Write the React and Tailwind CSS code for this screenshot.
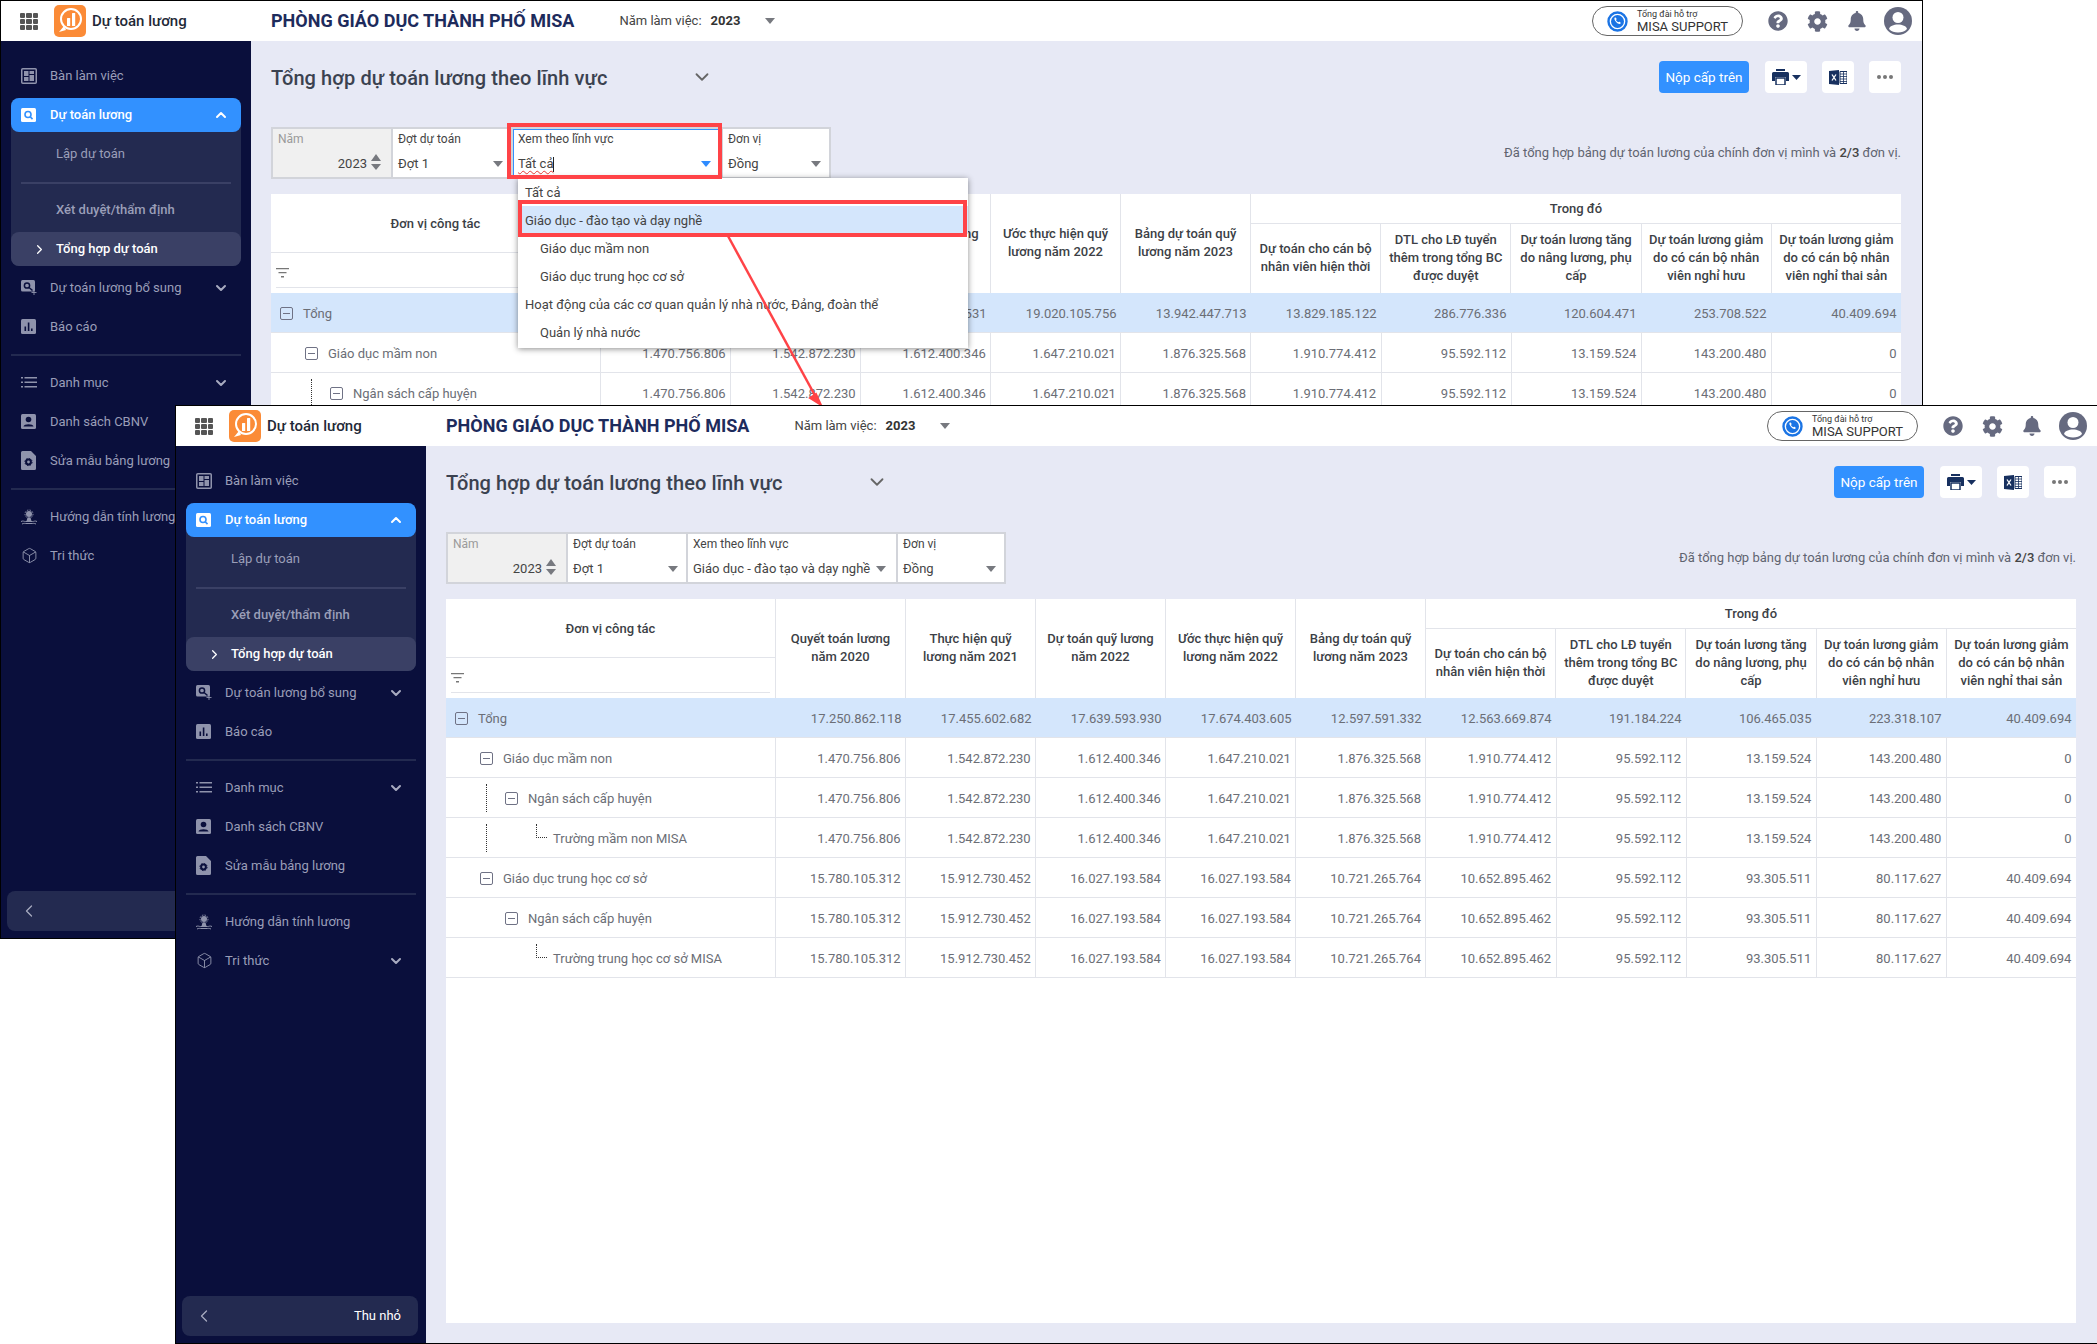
import React from "react";
import { ChevronDown, ChevronUp, ChevronRight, ChevronLeft, Box } from "lucide-react";
import { FaQuestionCircle, FaCog, FaBell } from "react-icons/fa";

const Tri = ({ className = "fill-[#77797f]", w = 10, h = 6 }) => (
  <svg width={w} height={h} viewBox="0 0 10 6" preserveAspectRatio="none" className={className}><path d="M0 0h10L5 6z" /></svg>
);

const GridIcon = () => (
  <div className="grid grid-cols-3 gap-[1px] w-[18px] h-[17px]">
    {Array.from({ length: 9 }).map((_, i) => <div key={i} className="bg-[#555] rounded-[1px]" />)}
  </div>
);

const Logo = () => (
  <svg width="32" height="32" viewBox="0 0 32 32">
    <rect width="32" height="32" rx="5" fill="#fb8b37" />
    <circle cx="17" cy="14" r="10" fill="none" stroke="#fff" strokeWidth="2" />
    <path d="M10 21l-5 6 7-2" fill="#fff" />
    <rect x="13" y="13" width="3.2" height="8" rx=".5" fill="#fff" />
    <rect x="18" y="8" width="3.2" height="13" rx=".5" fill="#fff" />
  </svg>
);

const c = "#8f93ac";
const IBoard = () => (
  <svg width="16" height="16" viewBox="0 0 16 16"><rect x=".75" y=".75" width="14.5" height="14.5" rx="1" fill="none" stroke={c} strokeWidth="1.5" /><path d="M3 3h4.5v5H3zM8.5 3H13v3H8.5zM3 9h4.5v4H3zM8.5 7H13v6H8.5z" fill={c} /></svg>
);
const ISearch = ({ fg = "#fff", bg = "#3291ff" }) => (
  <svg width="16" height="14" viewBox="0 0 16 14"><rect width="15" height="14" rx="1.5" fill={fg} /><circle cx="7" cy="6.5" r="3" fill="none" stroke={bg} strokeWidth="1.6" /><path d="M9.2 8.8l2.3 2.3" stroke={bg} strokeWidth="1.6" /></svg>
);
const ISearchPlus = () => (
  <svg width="16" height="15" viewBox="0 0 16 15"><rect width="14" height="11.5" rx="1.5" fill={c} /><circle cx="6" cy="5.5" r="2.6" fill="none" stroke="#0a0f3c" strokeWidth="1.5" /><path d="M8 7.5l3.5 3" stroke="#0a0f3c" strokeWidth="1.5" /><path d="M13 10v5M10.500 12.500h5" stroke={c} strokeWidth=".9" /></svg>
);
const IBars = () => (
  <svg width="15" height="15" viewBox="0 0 15 15"><rect width="15" height="15" rx="1.5" fill={c} /><path d="M3.500 7.500h1.600V12H3.500zM6.800 3.500h1.600V12H6.800zM10 9.500h1.600V12H10z" fill="#0a0f3c" /></svg>
);
const IList = () => (
  <svg width="16" height="11" viewBox="0 0 16 11" fill={c}><path d="M0 0h2v1.500H0zM3.500 0H16v1.500H3.500zM0 4.500h2V6H0zM3.500 4.500H16V6H3.500zM0 9h2v1.500H0zM3.500 9H16v1.500H3.500z" /></svg>
);
const IPerson = () => (
  <svg width="15" height="15" viewBox="0 0 15 15"><rect width="15" height="15" rx="1.500" fill={c} /><circle cx="7.500" cy="5.500" r="2.800" fill="#0a0f3c" /><path d="M2.500 12.500c.4-3 9.600-3 10 0z" fill="#0a0f3c" /></svg>
);
const IDocGear = () => (
  <svg width="15" height="19" viewBox="0 0 15 19"><path d="M1.500 0H10l5 5v12.500a1.500 1.500 0 01-1.500 1.500h-12A1.500 1.500 0 010 17.500v-16A1.500 1.500 0 011.500 0z" fill={c} /><circle cx="7.500" cy="11" r="2.400" fill="none" stroke="#0a0f3c" strokeWidth="2" /><circle cx="7.500" cy="11" r="3.600" fill="none" stroke="#0a0f3c" strokeWidth="1" strokeDasharray="1.500 1.300" /></svg>
);
const IGuide = () => (
  <svg width="16" height="16" viewBox="0 0 16 16"><circle cx="8" cy="5" r="3" fill={c} /><circle cx="8" cy="5" r="4" fill="none" stroke={c} strokeWidth="1" strokeDasharray="1.500 1.200" /><path d="M6.500 8.500h3l1 3.500h-5z" fill={c} /><path d="M0 12.500c2-1 3 0 4.500 0h7c1.500 0 2.500-1 4.500 0M1 15c2-1 3-.5 4-.5h6c1 0 2-.5 4 .5" fill="none" stroke={c} strokeWidth="1" /></svg>
);

function Item({ icon, label, chevron }) {
  return (
    <div className="h-[39px] flex items-center pl-[20px] pr-[22px] text-[13px] text-[#9a9eb8]">
      <div className="w-[29px] shrink-0 flex items-center">{icon}</div>
      <span className="whitespace-nowrap">{label}</span>
      {chevron && <ChevronDown size={16} strokeWidth={3} className="ml-auto text-[#a8abc0]" />}
    </div>
  );
}

function Sidebar() {
  return (
    <aside className="w-[250px] shrink-0 bg-[#0a0f3c] flex flex-col pt-[15px]">
      <Item icon={<IBoard />} label="Bàn làm việc" />
      <div className="mt-[3px] mx-[10px] w-[230px] bg-[#232a50] rounded-[8px] flex flex-col">
        <div className="h-[34px] bg-[#3291ff] rounded-[8px] flex items-center pl-[10px] pr-[12px] text-white text-[13px] font-medium">
          <div className="w-[29px] flex items-center"><ISearch /></div>
          <span>Dự toán lương</span>
          <ChevronUp size={16} strokeWidth={3} className="ml-auto" />
        </div>
        <div className="h-[41px] pl-[45px] pt-[2px] flex items-center text-[13px] text-[#9a9eb8]">Lập dự toán</div>
        <div className="mt-[9px] mx-[10px] h-[2px] bg-[#3a4065]" />
        <div className="h-[48px] pl-[45px] pt-[4px] flex items-center text-[13px] text-[#9a9eb8] font-medium">Xét duyệt/thẩm định</div>
        <div className="h-[34px] bg-[#3a4065] rounded-[8px] flex items-center pl-[21px] text-white text-[13px] font-medium">
          <ChevronRight size={15} strokeWidth={2} className="w-[24px] pr-[9px]" />
          <span>Tổng hợp dự toán</span>
        </div>
      </div>
      <div className="mt-[2px]">
        <Item icon={<ISearchPlus />} label="Dự toán lương bổ sung" chevron />
        <Item icon={<IBars />} label="Báo cáo" />
      </div>
      <div className="mt-[8px] mx-[10px] h-[2px] bg-[#232a50]" />
      <div className="mt-[7px]">
        <Item icon={<IList />} label="Danh mục" chevron />
        <Item icon={<IPerson />} label="Danh sách CBNV" />
        <Item icon={<IDocGear />} label="Sửa mẫu bảng lương" />
      </div>
      <div className="mt-[8px] mx-[10px] h-[2px] bg-[#232a50]" />
      <div className="mt-[7px]">
        <Item icon={<IGuide />} label="Hướng dẫn tính lương" />
        <Item icon={<Box size={17} strokeWidth={1.3} className="text-[#8f93ac]" />} label="Tri thức" chevron />
      </div>
      <div className="mt-auto mb-[7px] ml-[6px] mr-[8px] h-[40px] rounded-[8px] bg-[#232a50] flex items-center pl-[12px] pr-[17px] text-white text-[13px]">
        <ChevronLeft size={20} strokeWidth={1.5} className="text-[#a8abc0]" />
        <span className="ml-auto">Thu nhỏ</span>
      </div>
    </aside>
  );
}

const Phone = () => (
  <svg width="21" height="21" viewBox="0 0 21 21">
    <circle cx="10.500" cy="10.500" r="9" fill="#fff" stroke="#1b74e4" strokeWidth="2.400" />
    <circle cx="10.500" cy="10.500" r="6.500" fill="#1b74e4" />
    <path d="M7.500 7c.8-.8 1.500-.4 2 .8.2.6 0 1-.5 1.300.4 1 1.200 1.800 2.200 2.200.4-.5.800-.7 1.300-.5 1.200.5 1.600 1.200.8 2-1.500 1.300-6.800-3.300-5.800-5.800z" fill="#fff" />
  </svg>
);

function TopBar() {
  return (
    <header className="h-[40px] shrink-0 bg-white flex items-center">
      <div className="w-[270px] shrink-0 flex items-center pl-[19px]">
        <GridIcon />
        <div className="ml-[16px]"><Logo /></div>
        <span className="ml-[6px] text-[15px] font-medium text-[#1f2937] whitespace-nowrap">Dự toán lương</span>
      </div>
      <span className="text-[18px] font-bold text-[#1d2b5c] whitespace-nowrap pb-[2px]">PHÒNG GIÁO DỤC THÀNH PHỐ MISA</span>
      <span className="ml-[45px] text-[13px] text-[#444] whitespace-nowrap">Năm làm việc:</span>
      <span className="ml-[9px] text-[13px] font-bold text-[#333]">2023</span>
      <span className="ml-[25px]"><Tri /></span>
      <div className="ml-auto flex items-center pr-[10px]">
        <div className="w-[151px] h-[30px] rounded-full border border-[#666] flex items-center pl-[14px]">
          <Phone />
          <div className="ml-[9px] flex flex-col">
            <span className="text-[9px] leading-[10px] text-[#333] whitespace-nowrap">Tổng đài hỗ trợ</span>
            <span className="text-[13px] leading-[15px] text-[#333] whitespace-nowrap">MISA SUPPORT</span>
          </div>
        </div>
        <FaQuestionCircle size={20} className="ml-[25px] text-[#666a80]" />
        <FaCog size={21} className="ml-[19px] text-[#666a80]" />
        <FaBell size={20} className="ml-[19px] text-[#666a80]" />
        <svg width="28" height="28" viewBox="0 0 28 28" className="ml-[17px]">
          <circle cx="14" cy="14" r="14" fill="#666a80" />
          <circle cx="14" cy="10.500" r="5.500" fill="#fff" />
          <path d="M5 22c1-6 17-6 18 0-2.500 2.600-5.500 3.500-9 3.500s-6.500-.9-9-3.500z" fill="#fff" />
        </svg>
      </div>
    </header>
  );
}

function Field({ label, value, w, muted, focus, last, spin, wide }) {
  return (
    <div className={`relative ${w} h-[52px] border-y-2 border-l-2 border-[#d2d4da] ${last ? "border-r-2" : ""} ${muted ? "bg-[#f0f0f0]" : "bg-white"} pl-[5px] pt-[3px]`}>
      {focus && <div className="absolute inset-0 border-t border-l border-[#3291ff]" />}
      <div className={`text-[12px] leading-[14px] whitespace-nowrap ${muted ? "text-[#9a9a9a]" : "text-[#444]"}`}>{label}</div>
      <div className={`mt-[9px] text-[13px] leading-[18px] text-[#444] flex items-center whitespace-nowrap ${spin ? "justify-end pr-[24px]" : ""}`}>
        {focus ? (
          <>
            <span className="underline decoration-wavy decoration-[#e53935] decoration-1 underline-offset-2">{focus}</span>
            <span className="w-[1px] h-[15px] bg-[#222]" />
          </>
        ) : value}
      </div>
      {spin ? (
        <div className="absolute right-[10px] top-[25px] flex flex-col gap-[3px]">
          <Tri className="fill-[#77797f] rotate-180" w={10} h={7} />
          <Tri w={10} h={6} />
        </div>
      ) : (
        <div className={`absolute top-[32px] ${wide ? "right-[10px]" : "right-[8px]"}`}>
          <Tri className={focus ? "fill-[#2f8cff]" : "fill-[#77797f]"} />
        </div>
      )}
    </div>
  );
}

function Minus() {
  return (
    <div className="relative w-[13px] h-[13px] border border-[#6f7285] rounded-[2px] shrink-0">
      <div className="absolute left-[2px] right-[2px] top-[5px] h-[1px] bg-[#6f7285]" />
    </div>
  );
}

const cols = [
  "Quyết toán lương\nnăm 2020",
  "Thực hiện quỹ\nlương năm 2021",
  "Dự toán quỹ lương\nnăm 2022",
  "Ước thực hiện quỹ\nlương năm 2022",
  "Bảng dự toán quỹ\nlương năm 2023",
];
const subCols = [
  "Dự toán cho cán bộ\nnhân viên hiện thời",
  "DTL cho LĐ tuyển\nthêm trong tổng BC\nđược duyệt",
  "Dự toán lương tăng\ndo nâng lương, phụ\ncấp",
  "Dự toán lương giảm\ndo có cán bộ nhân\nviên nghỉ hưu",
  "Dự toán lương giảm\ndo có cán bộ nhân\nviên nghỉ thai sản",
];

const MN = ["1.470.756.806", "1.542.872.230", "1.612.400.346", "1.647.210.021", "1.876.325.568", "1.910.774.412", "95.592.112", "13.159.524", "143.200.480", "0"];
const TH = ["15.780.105.312", "15.912.730.452", "16.027.193.584", "16.027.193.584", "10.721.265.764", "10.652.895.462", "95.592.112", "93.305.511", "80.117.627", "40.409.694"];

function Row({ name, level, values, total, dotted, leaf }) {
  const pad = ["pl-[9px]", "pl-[34px]", "pl-[59px]"][level];
  return (
    <div className={`flex h-[40px] border-b border-[#e2e4ea] text-[13px] text-[#6b6e76] ${total ? "bg-[#d4e6fc]" : ""}`}>
      <div className={`relative w-[330px] shrink-0 flex items-center pt-[2px] whitespace-nowrap ${leaf ? "pl-[107px]" : pad} ${total ? "" : "border-r border-[#e2e4ea]"}`}>
        {dotted && <div className="absolute left-[40px] top-[6px] bottom-[5px] border-l border-dotted border-[#333]" />}
        {leaf && <div className="absolute left-[90px] top-[6px] w-[11px] h-[14px] border-l border-b border-dotted border-[#333]" />}
        {!leaf && <Minus />}
        <span className={leaf ? "" : "ml-[10px]"}>{name}</span>
      </div>
      {values.map((v, i) => (
        <div key={i} className={`flex-1 flex items-center justify-end pt-[2px] pr-[4.5px] ${total ? "" : "border-r border-[#e2e4ea] last:border-r-0"}`}>{v}</div>
      ))}
    </div>
  );
}

function Table({ totals, back }) {
  return (
    <div className="flex-1 min-h-0 mb-[20px] mt-[15px] bg-white overflow-hidden">
      <div className="flex h-[99px] text-[13px] leading-[18px] text-[#3c3f46] font-medium">
        <div className="w-[330px] shrink-0 flex flex-col border-r border-[#e2e4ea]">
          <div className="h-[59px] pt-[2px] flex items-center justify-center border-b border-[#e2e4ea]">Đơn vị công tác</div>
          <div className="mx-[5px] h-[35px] pt-[5px] border-b border-[#e2e4ea] flex items-center">
            <svg width="13" height="10" viewBox="0 0 13 10" fill="#777"><path d="M0 0h13v1.200H0zM2.500 4h8v1.200h-8zM5 8h3v1.500H5z" /></svg>
          </div>
        </div>
        {cols.map((t, i) => (
          <div key={t} className="flex-1 flex items-center justify-center text-center pb-[2px] whitespace-pre-line border-r border-[#e2e4ea]">{back && i < 2 ? "" : t}</div>
        ))}
        <div className="w-[650px] shrink-0 flex flex-col">
          <div className="h-[30px] flex items-center justify-center border-b border-[#e2e4ea]">Trong đó</div>
          <div className="flex-1 flex">
            {subCols.map((t) => (
              <div key={t} className="flex-1 flex items-center justify-center text-center pb-[2px] whitespace-pre-line border-r border-[#e2e4ea] last:border-r-0">{t}</div>
            ))}
          </div>
        </div>
      </div>
      <Row name="Tổng" level={0} values={totals} total />
      <Row name="Giáo dục mầm non" level={1} values={MN} />
      <Row name="Ngân sách cấp huyện" level={2} values={MN} dotted />
      {!back && (
        <>
          <Row name="Trường mầm non MISA" level={2} values={MN} dotted leaf />
          <Row name="Giáo dục trung học cơ sở" level={1} values={TH} />
          <Row name="Ngân sách cấp huyện" level={2} values={TH} />
          <Row name="Trường trung học cơ sở MISA" level={2} values={TH} leaf />
        </>
      )}
    </div>
  );
}

function PageBody({ totals, xem, focus, back }) {
  return (
    <main className="flex-1 min-w-0 bg-[#e7e9f5] pl-[20px] pr-[21px] pt-[20px] flex flex-col">
      <div className="h-[32px] flex items-center shrink-0">
        <h1 className="text-[20px] font-medium tracking-[0.1px] pt-[2px] text-[#3b4250] whitespace-nowrap">Tổng hợp dự toán lương theo lĩnh vực</h1>
        <ChevronDown size={22} strokeWidth={2} className="ml-[83px] text-[#666]" />
        <div className="ml-auto flex items-center">
          <button className="w-[90px] h-[32px] rounded-[4px] bg-[#3291ff] text-white text-[13.5px]">Nộp cấp trên</button>
          <div className="ml-[16px] w-[42px] h-[32px] rounded-[4px] bg-white flex items-center justify-center gap-[3px]">
            <svg width="17" height="16" viewBox="0 0 17 16" fill="#17305f"><path d="M4 0h9v2H4zM0 4.500a1.500 1.500 0 011.500-1.500h14A1.500 1.500 0 0117 4.500V12h-3V8H3v4H0z" /><path d="M4 9h9v7H4z" fill="none" stroke="#17305f" strokeWidth="1.500" /></svg>
            <Tri className="fill-[#17305f]" w={9} h={5} />
          </div>
          <div className="ml-[15px] w-[32px] h-[32px] rounded-[4px] bg-white flex items-center justify-center">
            <svg width="18" height="15" viewBox="0 0 18 15"><path d="M0 1l10-1v15L0 14z" fill="#17305f" /><path d="M3 4.500l4 6M7 4.500l-4 6" stroke="#fff" strokeWidth="1.300" /><path d="M11 1.500h7v12h-7z" fill="#fff" stroke="#17305f" /><path d="M11 4h7M11 6.500h7M11 9h7M11 11.500h7M14.500 1.500v12" stroke="#17305f" strokeWidth=".8" /></svg>
          </div>
          <div className="ml-[15px] w-[32px] h-[32px] rounded-[4px] bg-white flex items-center justify-center gap-[2px]">
            <div className="w-[4px] h-[4px] rounded-full bg-[#777]" />
            <div className="w-[4px] h-[4px] rounded-full bg-[#777]" />
            <div className="w-[4px] h-[4px] rounded-full bg-[#777]" />
          </div>
        </div>
      </div>
      <div className="mt-[34px] flex items-center shrink-0">
        <Field label="Năm" value="2023" w="w-[120px]" muted spin />
        <Field label="Đợt dự toán" value="Đợt 1" w="w-[120px]" />
        <Field label="Xem theo lĩnh vực" value={xem} focus={focus} w="w-[210px]" wide />
        <Field label="Đơn vị" value="Đồng" w="w-[110px]" last />
        <div className="ml-auto text-[13px] text-[#5f6470] whitespace-nowrap">
          Đã tổng hợp bảng dự toán lương của chính đơn vị mình và <b className="font-medium text-[#444]">2/3</b> đơn vị.
        </div>
      </div>
      <Table totals={totals} back={back} />
    </main>
  );
}

function Window({ className, totals, xem, focus, back, children }) {
  return (
    <div className={`absolute w-[1923px] h-[939px] border border-black flex flex-col font-['Roboto',sans-serif] ${className}`}>
      <TopBar />
      <div className="flex-1 min-h-0 flex">
        <Sidebar />
        <PageBody totals={totals} xem={xem} focus={focus} back={back} />
      </div>
      {children}
    </div>
  );
}

function Dropdown() {
  const items = [
    ["Tất cả", 0],
    ["Giáo dục - đào tạo và dạy nghề", 0, true],
    ["Giáo dục mầm non", 1],
    ["Giáo dục trung học cơ sở", 1],
    ["Hoạt động của các cơ quan quản lý nhà nước, Đảng, đoàn thể", 0],
    ["Quản lý nhà nước", 1],
  ];
  return (
    <div className="absolute left-[517px] top-[177px] w-[450px] h-[170px] bg-white shadow-[0_1px_6px_rgba(0,0,0,0.45)] text-[13px] text-[#444]">
      {items.map(([t, ind, sel]) => (
        <div key={t} className={`h-[28px] pt-[2px] flex items-center whitespace-nowrap ${ind ? "pl-[22px]" : "pl-[7px]"} ${sel ? "bg-[#d4e6fc]" : ""}`}>{t}</div>
      ))}
    </div>
  );
}

export default function App() {
  const backTotals = ["", "", "18.811.131.531", "19.020.105.756", "13.942.447.713", "13.829.185.122", "286.776.336", "120.604.471", "253.708.522", "40.409.694"];
  const frontTotals = ["17.250.862.118", "17.455.602.682", "17.639.593.930", "17.674.403.605", "12.597.591.332", "12.563.669.874", "191.184.224", "106.465.035", "223.318.107", "40.409.694"];
  return (
    <div className="relative w-[2097px] h-[1344px] bg-white overflow-hidden">
      <Window className="left-0 top-0" totals={backTotals} focus="Tất cả" xem="Tất cả" back>
        <Dropdown />
        <div className="absolute left-[506px] top-[122px] w-[215px] h-[56px] border-[4px] border-[#ff4347]" />
        <div className="absolute left-[517px] top-[199px] w-[449px] h-[37px] border-[4px] border-[#ff4347]" />
        <svg className="absolute left-[720px] top-[230px]" width="110" height="180" viewBox="0 0 110 180">
          <path d="M7 5l90 165" stroke="#ff4347" strokeWidth="2.500" fill="none" />
          <path d="M100 174l-11-7 6-4z" fill="#ff4347" stroke="#ff4347" strokeWidth="2" />
        </svg>
      </Window>
      <Window className="left-[175px] top-[405px]" totals={frontTotals} xem="Giáo dục - đào tạo và dạy nghề" />
    </div>
  );
}
